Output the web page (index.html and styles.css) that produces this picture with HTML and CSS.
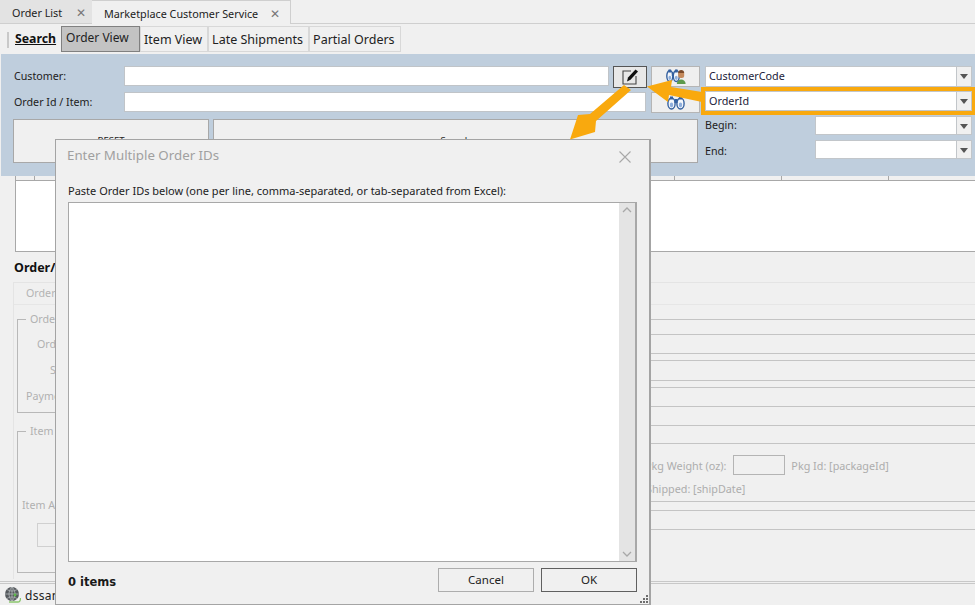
FILE: index.html
```html
<!DOCTYPE html>
<html lang="en">
<head>
<meta charset="utf-8">
<title>Marketplace Customer Service</title>
<link rel="stylesheet" href="styles.css">
</head>
<body>
<div class="app">
  <div class="tabs">
    <div class="tab">Order List <span class="tab-x">✕</span></div>
    <div class="tab tab-active">Marketplace Customer Service <span class="tab-x">✕</span></div>
  </div>
  <div class="toolbar">
    <span class="grip"></span>
    <span class="tool-search">Search</span>
    <span class="tool tool-on">Order View</span>
    <span class="tool tool-item">Item View</span>
    <span class="tool tool-late">Late Shipments</span>
    <span class="tool tool-part">Partial Orders</span>
  </div>
  <div class="panel">
    <div class="panel-left">
      <div class="row">
        <label class="lbl">Customer:</label>
        <div class="input input-cust"></div>
        <div class="btn-edit">
          <svg width="22" height="20" viewBox="0 0 22 20"><path d="M12 4H4v13h13v-8" fill="none" stroke="#444" stroke-width="1.100"/><path d="M8 14.500 L9 10.500 L16.500 2.500 L19 4.500 L11.500 12.800 Z" fill="#111"/></svg>
        </div>
        <div class="btn-find">
          <svg width="20" height="17" viewBox="0 0 20 17"><g fill="#f4f7fb" stroke="#34609f" stroke-width="1.400"><ellipse cx="3.800" cy="8" rx="3" ry="5.500"/><ellipse cx="10.300" cy="8" rx="3" ry="5.500"/></g><path d="M2.500 1.500h2.600v3H2.500zM9 1.500h2.600v3H9zM5.800 4h1.500v4H5.800z" fill="#34609f"/><ellipse cx="3.800" cy="9.800" rx="1.400" ry="2.100" fill="#8eaedb"/><ellipse cx="10.300" cy="9.800" rx="1.400" ry="2.100" fill="#8eaedb"/><rect x="12.200" y="3" width="6" height="7" rx="2.500" fill="#c58a5c"/><path d="M12.200 5c0-2 1.200-3 3-3s3 1 3 3z" fill="#7a4a2a"/><path d="M10.800 16c0-6 8.800-6 8.800 0z" fill="#5d9a4c"/></svg>
        </div>
      </div>
      <div class="row">
        <label class="lbl">Order Id / Item:</label>
        <div class="input input-order"></div>
        <div class="btn-find">
          <svg width="18" height="15" viewBox="0 0 18 15"><g fill="#f4f7fb" stroke="#34609f" stroke-width="1.400"><ellipse cx="4.500" cy="8.500" rx="3.600" ry="5.500"/><ellipse cx="13.500" cy="8.500" rx="3.600" ry="5.500"/></g><path d="M3 1.500h3v3H3zM12 1.500h3v3h-3zM7.500 4h3v4h-3z" fill="#34609f"/><ellipse cx="4.500" cy="10" rx="1.700" ry="2.400" fill="#8eaedb"/><ellipse cx="13.500" cy="10" rx="1.700" ry="2.400" fill="#8eaedb"/></svg>
        </div>
      </div>
      <div class="actions">
        <div class="action action-reset">RESET</div>
        <div class="action action-search">Search</div>
      </div>
    </div>
    <div class="panel-right">
      <div class="combo"><span class="combo-val">CustomerCode</span><span class="combo-arrow"></span></div>
      <div class="combo combo-hl"><span class="combo-val">OrderId</span><span class="combo-arrow"></span></div>
      <div class="date-row"><span class="date-lbl">Begin:</span><div class="combo date-combo"><span class="combo-val"></span><span class="combo-arrow"></span></div></div>
      <div class="date-row date-row-end"><span class="date-lbl">End:</span><div class="combo date-combo"><span class="combo-val"></span><span class="combo-arrow"></span></div></div>
    </div>
  </div>
  <div class="grid-head"><span></span><span></span><span></span><span></span><span></span></div>
  <div class="grid-body"></div>
  <h2 class="heading">Order/</h2>
  <div class="detail">
    <div class="detail-tab">Order</div>
    <div class="detail-body">
      <div class="groups">
        <div class="group group-order">
          <span class="legend">Order</span>
          <div class="g-line g-ord">Ord</div>
          <div class="g-line g-s">S</div>
          <div class="g-line g-pay">Payme</div>
        </div>
        <div class="group group-item">
          <span class="legend">Item</span>
          <div class="g-line g-item">Item A</div>
          <div class="g-box"></div>
        </div>
      </div>
      <div class="lines">
        <div></div><div></div><div></div><div></div><div></div><div></div><div></div><div></div><div></div>
        <div class="pkg">
          <div class="pkg-row"><span>Pkg Weight (oz):</span><span class="pkg-box"></span><span>Pkg Id: [packageId]</span></div>
          <div class="ship-row">Shipped: [shipDate]</div>
        </div>
        <div></div><div></div>
      </div>
    </div>
  </div>
  <div class="status">
    <svg class="globe" width="17" height="18" viewBox="0 0 17 18"><circle cx="8" cy="8" r="7" fill="#55595d"/><path d="M1 8h14M8 1v14M3 3.500c3 2 7 2 10 0M3 12.500c3-2 7-2 10 0M8 1c-4 4-4 10 0 14M8 1c4 4 4 10 0 14" fill="none" stroke="#bfc3c5" stroke-width=".7"/><path d="M5 16h9c2 0 2.500-2 2.500-4" fill="none" stroke="#8cc66e" stroke-width="1.300"/><circle cx="11" cy="9" r="1.400" fill="#5cb848"/></svg>
    <span class="status-txt">dssan</span>
  </div>
</div>

<div class="dialog">
  <div class="dlg-title"><span>Enter Multiple Order IDs</span><span class="dlg-x"><svg width="12" height="12" viewBox="0 0 12 12"><path d="M.5.5l11 11M11.500.5l-11 11" stroke="#a8a8a8" stroke-width="1.100" fill="none"/></svg></span></div>
  <div class="dlg-body">
    <p class="dlg-label">Paste Order IDs below (one per line, comma-separated, or tab-separated from Excel):</p>
    <div class="dlg-area">
      <div class="dlg-scroll">
        <svg width="10" height="6" viewBox="0 0 10 6"><path d="M1 5l4-4 4 4" fill="none" stroke="#a8a8a8" stroke-width="1.300"/></svg>
        <svg width="10" height="6" viewBox="0 0 10 6"><path d="M1 1l4 4 4-4" fill="none" stroke="#a8a8a8" stroke-width="1.300"/></svg>
      </div>
    </div>
    <div class="dlg-foot">
      <span class="dlg-count">0 items</span>
      <span class="dlg-btn">Cancel</span>
      <span class="dlg-btn dlg-ok">OK</span>
    </div>
  </div>
  <svg class="dlg-grip" width="9" height="9" viewBox="0 0 9 9"><path d="M6 0h2v2H6zM3 3h2v2H3zM6 3h2v2H6zM0 6h2v2H0zM3 6h2v2H3zM6 6h2v2H6z" fill="#6e6e6e"/></svg>
</div>

<svg class="arrows" width="975" height="605" viewBox="0 0 975 605">
  <path d="M702 92 L671 87 L672 80 L647 86.500 L668 102 L669 95 L702 102 Z" fill="#f9a90e"/>
  <path d="M624 85 L590 114 L578 115 L570 139.500 L595 132 L596 121 L631 90 Z" fill="#f9a90e"/>
</svg>
</body>
</html>
```
FILE: styles.css
```css
* { box-sizing: border-box; }
html, body { margin: 0; padding: 0; width: 975px; height: 605px; overflow: hidden; background: #f0f0f0; }
body { position: relative; font-family: "Noto Sans", sans-serif; font-size: 11px; color: #222; }
.app { height: 605px; display: flex; flex-direction: column; }

.tabs { height: 24px; display: flex; border-bottom: 1px solid #cfcfcf; background: #f0f0f0; flex: none; }
.tab { width: 92px; height: 23px; padding: 5px 0 0 12px; background: #e3e3e3; color: #222; font-size: 10.800px; line-height: 15px; white-space: nowrap; }
.tab-active { width: 199px; height: 24px; padding-left: 12px; background: #f0f0f0; border: 1px solid #cfcfcf; border-bottom: none; border-left: none; }
.tab-x { margin-left: 11px; color: #777; font-size: 12px; }
.tab-active .tab-x { margin-left: 9px; }

.toolbar { height: 30px; padding: 2px 0 2px 7px; display: flex; align-items: stretch; flex: none; font-size: 13px; }
.grip { width: 2px; margin: 6px 6px 4px 0; background: #c9c9c9; }
.tool-search { font-weight: 700; text-decoration: underline; color: #111; font-size: 12.300px; line-height: 25px; margin-right: 5px; }
.tool { border: 1px solid #d8d8d8; padding: 1px 3px 0; line-height: 24px; font-size: 12.500px; color: #222; white-space: nowrap; }
.tool-on { width: 79px; padding: 0 4px; background: #c3c3c3; border: 1px solid #808080; font-size: 12px; line-height: 22px; }
.tool-item { width: 68px; }
.tool-late { width: 101px; }
.tool-part { width: 92px; }

.panel { height: 122px; margin-left: 1px; background: #bfcedd; display: flex; padding: 12px 3px 0 12px; gap: 5px; flex: none; }
.panel-left { width: 687px; }
.row { display: flex; height: 26px; align-items: flex-start; }
.lbl { width: 111px; padding: 3px 0 0 1px; font-size: 10.700px; color: #222; white-space: nowrap; }
.input { height: 20px; background: #fff; border: 1px solid #c0c4c8; }
.input-cust { width: 485px; }
.input-order { width: 522px; margin-right: 5px; }
.btn-edit { width: 34px; height: 22px; margin: 0 4px 0 4px; background: #e8e8e8; border: 1.500px solid #555; display: flex; align-items: center; justify-content: center; }
.btn-find { width: 49px; height: 21px; background: #efefef; border: 1px solid #b5b5b5; display: flex; align-items: center; justify-content: center; }
.actions { display: flex; gap: 4px; margin-top: 1px; }
.action { height: 44px; background: #f0f0f0; border: 1px solid #a8a8a8; text-align: center; padding-top: 14px; font-size: 9.500px; color: #222; }
.action-reset { width: 196px; }
.action-search { width: 485px; }

.panel-right { width: 267px; display: flex; flex-direction: column; }
.combo { height: 21px; display: flex; background: #f0f0f0; border: 1px solid #c2c6ca; flex: none; }
.combo-val { flex: 1; background: #fff; padding: 0 3px; line-height: 18px; font-size: 10.800px; color: #1c1c3a; border-right: 1px solid #c2c6ca; }
.combo-arrow { width: 14px; position: relative; }
.combo-arrow::after { content: ""; position: absolute; left: 3px; top: 7px; border: 4px solid transparent; border-top: 5px solid #555; border-bottom: none; }
.combo-hl { height: 20px; margin-top: 4px; outline: 4px solid #f9a90e; position: relative; }
.date-row { display: flex; margin-top: 5px; height: 19px; align-items: flex-start; }
.date-row-end { margin-top: 5px; }
.date-row-end .date-lbl { padding-top: 4px; }
.date-lbl { width: 110px; font-size: 10.700px; color: #222; padding-top: 2px; }
.date-combo { width: 157px; height: 19px; }

.grid-head { height: 5px; margin-left: 15px; display: grid; grid-template-columns: 19px 640px 107px 107px 1fr; flex: none; border-bottom: 1px solid #a8a8a8; }
.grid-head span { border-left: 1px solid #a8a8a8; }
.grid-body { height: 71px; margin-left: 15px; background: #fff; border-left: 1px solid #a8a8a8; border-bottom: 1px solid #a8a8a8; flex: none; }

.heading { margin: 8px 0 0 14px; height: 22px; font-size: 12.500px; font-weight: 700; color: #111; line-height: 16px; flex: none; }

.detail { margin-left: 13px; height: 297px; border-left: 1px solid #e4e4e4; border-top: 1px solid #e4e4e4; flex: none; display: flex; flex-direction: column; }
.detail-tab { height: 22px; padding: 3px 0 0 12px; color: #b4b4b4; border-bottom: 1px solid #e6e6e6; font-size: 10.700px; flex: none; }
.detail-body { display: grid; grid-template-columns: 636px 1fr; flex: 1; min-height: 0; }
.groups { position: relative; padding: 14px 0 0 3px; display: flex; flex-direction: column; gap: 18px; }
.group { position: relative; border: 1px solid #b8b8b8; border-right: none; color: #b0b0b0; font-size: 10.700px; }
.group-order { height: 94px; }
.group-item { height: 142px; }
.legend { position: absolute; left: 8px; top: -9px; padding: 0 4px; background: #f0f0f0; line-height: 16px; }
.g-line { position: absolute; white-space: nowrap; }
.g-ord { left: 19px; top: 17px; }
.g-s { left: 32px; top: 43px; }
.g-pay { left: 8px; top: 69px; }
.g-item { left: 4px; top: 66px; }
.g-box { position: absolute; left: 19px; top: 91px; width: 200px; height: 24px; border: 1px solid #d0d0d0; }

.lines { display: grid; grid-template-rows: 15px 15px 19px 7px 20px 7px 19px 19px 18px 58px 9px 19px; align-content: start; }
.lines > div { border-bottom: 1px solid #c4c4c4; }
.pkg { color: #adadad; font-size: 10.800px; white-space: nowrap; border-bottom-color: #cfcfcf; }
.pkg-row { display: flex; align-items: center; gap: 6px; margin: 11px 0 0 -5px; height: 20px; }
.pkg-box { width: 52px; height: 20px; border: 1px solid #b4b4b4; margin-left: 1px; }
.ship-row { margin: 6px 0 0 -4px; }

.status { flex: 1; border-top: 3px double #c8c8c8; display: flex; align-items: center; padding: 1px 0 0 4px; gap: 4px; margin-top: 2px; }
.status-txt { font-size: 12px; color: #222; letter-spacing: .3px; }
.globe { flex: none; }

.dialog { position: absolute; left: 55px; top: 139px; width: 596px; height: 466px; background: #f0f0f0; border: 1px solid #a4a4a4; border-right-width: 2px; display: flex; flex-direction: column; }
.dlg-title { height: 36px; padding: 6px 18px 0 11px; display: flex; justify-content: space-between; font-size: 13.300px; color: #a0a0a0; flex: none; }
.dlg-x { padding-top: 3px; }
.dlg-body { flex: 1; padding: 7px 12px 0 12px; display: flex; flex-direction: column; }
.dlg-label { margin: 0 0 4px; height: 15px; font-size: 11px; line-height: 15px; color: #222; white-space: nowrap; }
.dlg-area { width: 569px; height: 360px; background: #fff; border: 1px solid #a8a8a8; border-right: 2px solid #a8a8a8; display: flex; justify-content: flex-end; flex: none; }
.dlg-scroll { width: 16px; background: #e4e4e4; display: flex; flex-direction: column; justify-content: space-between; align-items: center; padding: 4px 0; }
.dlg-foot { display: flex; align-items: center; margin-top: 5px; gap: 7px; height: 25px; }
.dlg-count { flex: 1; font-family: "DejaVu Sans", sans-serif; font-weight: 700; font-size: 11.500px; color: #1a1a1a; padding-top: 4px; }
.dlg-btn { width: 96px; height: 24px; background: #f0f0f0; border: 1px solid #adadad; text-align: center; line-height: 22px; font-size: 11.500px; color: #222; }
.dlg-ok { border-color: #606060; }
.dlg-grip { position: absolute; right: 0; bottom: 0; }

.arrows { position: absolute; left: 0; top: 0; pointer-events: none; }
```
